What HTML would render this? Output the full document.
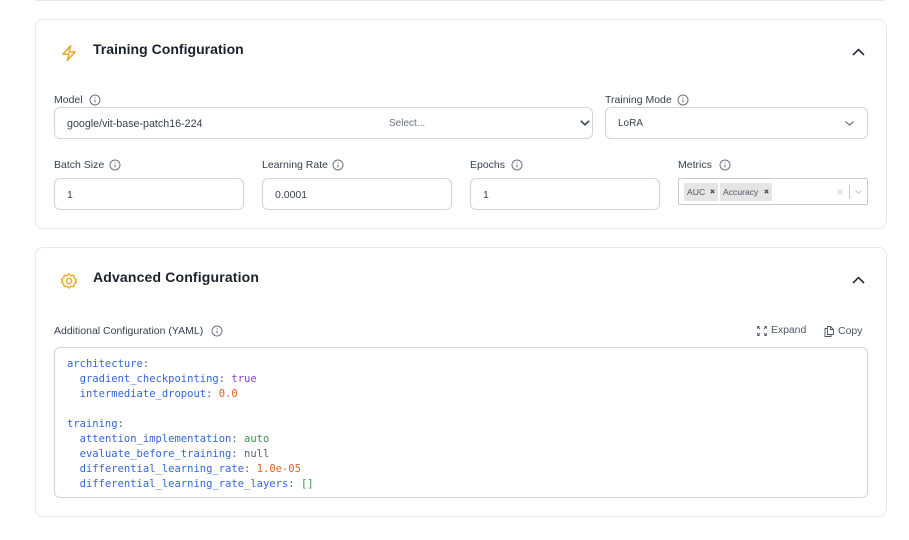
<!DOCTYPE html>
<html><head><meta charset="utf-8">
<style>
html,body{margin:0;padding:0;background:#fff;width:909px;height:540px;overflow:hidden}
body{position:relative;font-family:"Liberation Sans",sans-serif;color:#111827}
.a{position:absolute;white-space:pre}
.card{position:absolute;left:35px;width:850px;border:1px solid #e5e7eb;border-radius:8px;background:#fff}
.h{font-size:14px;font-weight:bold;color:#1a202c;left:93px;line-height:18px}
.l{font-size:10.500px;color:#374151;line-height:14px}
.i{position:absolute;border:1px solid #d1d5db;border-radius:6px;background:#fff;box-sizing:border-box}
.t{font-size:10.500px;color:#374151;line-height:14px}
svg{position:absolute;overflow:visible}
.code{position:absolute;left:67px;top:357px;font:10.500px/15px "DejaVu Sans Mono",monospace;color:#5b6472;white-space:pre}
.k{color:#3566d6}.s{color:#3f8f4f}.n{color:#d9622b}.b{color:#8a3fd0}
.tag{position:absolute;top:183px;height:18px;background:#e5e5e5;font-size:8.600px;line-height:18px;color:#4b5563;white-space:pre;padding-left:3px;box-sizing:border-box}
</style></head><body>
<div class="a" style="left:35px;top:0;width:850px;height:1px;background:#e5e7eb"></div>

<div class="card" style="top:19px;height:208px"></div>
<div class="card" style="top:247px;height:268px"></div>

<svg style="left:60px;top:44px" width="18" height="18" viewBox="0 0 24 24" fill="none" stroke="#e8a92e" stroke-width="2" stroke-linejoin="round"><path d="M3.750 13.500 14.250 2.250 12 10.500h8.250L9.750 21.750 12 13.500H3.750z"/></svg>
<div class="a h" style="top:40px;letter-spacing:.03px">Training Configuration</div>
<svg style="left:852px;top:47px" width="13" height="10" viewBox="0 0 13 10" fill="none" stroke="#111827" stroke-width="1.500"><path d="M1 8 6.500 2.500 12 8"/></svg>

<div class="a l" style="left:54px;top:93px">Model</div>
<svg style="left:89px;top:94px" width="12" height="12" viewBox="0 0 12 12" fill="none" stroke="#6b7280"><circle cx="6" cy="6" r="5"/><path d="M6 5.500v3M6 3.200v1"/></svg>
<div class="i" style="left:54px;top:107px;width:539px;height:32px"></div>
<div class="a t" style="left:67px;top:117px;font-size:10.700px">google/vit-base-patch16-224</div>
<div class="a t" style="left:389px;top:117px;color:#6b7280;font-size:10px">Select...</div>
<svg style="left:580px;top:120px" width="10" height="6" viewBox="0 0 10 6" fill="none" stroke="#4b5563" stroke-width="1.800"><path d="M.8.800 5 4.800 9.200.8"/></svg>

<div class="a l" style="left:605px;top:93px">Training Mode</div>
<svg style="left:677px;top:94px" width="12" height="12" viewBox="0 0 12 12" fill="none" stroke="#6b7280"><circle cx="6" cy="6" r="5"/><path d="M6 5.500v3M6 3.200v1"/></svg>
<div class="i" style="left:605px;top:107px;width:263px;height:32px"></div>
<div class="a t" style="left:618px;top:117px;font-size:10px">LoRA</div>
<svg style="left:845px;top:121px" width="9" height="5" viewBox="0 0 9 5" fill="none" stroke="#4b5563"><path d="M.5.500 4.500 4 8.500.5"/></svg>

<div class="a l" style="left:54px;top:158px">Batch Size</div>
<svg style="left:109px;top:159px" width="12" height="12" viewBox="0 0 12 12" fill="none" stroke="#6b7280"><circle cx="6" cy="6" r="5"/><path d="M6 5.500v3M6 3.200v1"/></svg>
<div class="i" style="left:54px;top:178px;width:190px;height:32px"></div>
<div class="a t" style="left:67px;top:188px">1</div>

<div class="a l" style="left:262px;top:158px">Learning Rate</div>
<svg style="left:332px;top:159px" width="12" height="12" viewBox="0 0 12 12" fill="none" stroke="#6b7280"><circle cx="6" cy="6" r="5"/><path d="M6 5.500v3M6 3.200v1"/></svg>
<div class="i" style="left:262px;top:178px;width:190px;height:32px"></div>
<div class="a t" style="left:275px;top:188px">0.0001</div>

<div class="a l" style="left:470px;top:158px">Epochs</div>
<svg style="left:511px;top:159px" width="12" height="12" viewBox="0 0 12 12" fill="none" stroke="#6b7280"><circle cx="6" cy="6" r="5"/><path d="M6 5.500v3M6 3.200v1"/></svg>
<div class="i" style="left:470px;top:178px;width:190px;height:32px"></div>
<div class="a t" style="left:483px;top:188px">1</div>

<div class="a l" style="left:678px;top:158px">Metrics</div>
<svg style="left:719px;top:159px" width="12" height="12" viewBox="0 0 12 12" fill="none" stroke="#6b7280"><circle cx="6" cy="6" r="5"/><path d="M6 5.500v3M6 3.200v1"/></svg>
<div class="i" style="left:678px;top:178px;width:190px;height:27px;border-radius:2px;border-color:#c9c9c9"></div>
<div class="tag" style="left:684px;width:34px">AUC</div>
<div class="tag" style="left:720px;width:52px">Accuracy</div>
<svg style="left:710px;top:189px" width="5" height="5" viewBox="0 0 5 5" stroke="#374151" stroke-width="1.100"><path d="M.8.800l3.400 3.400M4.200.800.800 4.200"/></svg>
<svg style="left:764px;top:189px" width="5" height="5" viewBox="0 0 5 5" stroke="#374151" stroke-width="1.100"><path d="M.8.800l3.400 3.400M4.200.800.800 4.200"/></svg>
<svg style="left:837px;top:189px" width="6" height="6" viewBox="0 0 6 6" stroke="#c4c4c4" stroke-width="1"><path d="M.8.800l4.400 4.400M5.200.800.800 5.200"/></svg>
<div class="a" style="left:849px;top:185px;width:1px;height:14px;background:#c9c9c9"></div>
<svg style="left:855px;top:190px" width="7" height="4" viewBox="0 0 7 4" fill="none" stroke="#c4c4c4"><path d="M.5.500l3 2.600 3-2.600"/></svg>

<svg style="left:60px;top:272px" width="18" height="18" viewBox="0 0 24 24" fill="none" stroke="#e8ad38" stroke-width="2" stroke-linejoin="round"><circle cx="12" cy="12" r="3.500"/><path d="M12 2.500l2.700 2.500 3.600-.5.700 3.500 3 2-1.500 2 1.500 2-3 2-.7 3.500-3.600-.5L12 21.500 9.300 19l-3.600.5L5 16l-3-2 1.500-2L2 10l3-2 .7-3.500 3.600.5z"/></svg>
<div class="a h" style="top:268px;letter-spacing:.16px">Advanced Configuration</div>
<svg style="left:852px;top:275px" width="13" height="10" viewBox="0 0 13 10" fill="none" stroke="#111827" stroke-width="1.500"><path d="M1 8 6.500 2.500 12 8"/></svg>

<div class="a l" style="left:54px;top:324px">Additional Configuration (YAML)</div>
<svg style="left:211px;top:325px" width="12" height="12" viewBox="0 0 12 12" fill="none" stroke="#6b7280"><circle cx="6" cy="6" r="5"/><path d="M6 5.500v3M6 3.200v1"/></svg>
<svg style="left:757px;top:326px" width="10" height="10" viewBox="0 0 10 10" fill="none" stroke="#4b5563" stroke-width=".9"><path d="M.6 2.800V.6h2.200M7.200.6h2.200v2.200M.6 7.200v2.200h2.200M7.200 9.400h2.200V7.200M1 1l2 2M9 1 7 3M1 9l2-2M9 9 7 7"/></svg>
<div class="a l" style="left:771px;top:324px;color:#4b5563;font-size:10.400px">Expand</div>
<svg style="left:824px;top:326px" width="11" height="11" viewBox="0 0 11 11" fill="none" stroke="#4b5563" stroke-width=".9"><path d="M3 2.500H1v8h6V8.500"/><path d="M3.500.5h3l3 3v5h-6z"/><path d="M6.500.5v3h3"/></svg>
<div class="a l" style="left:838px;top:324px;color:#4b5563">Copy</div>

<div class="i" style="left:54px;top:347px;width:814px;height:151px"></div>
<div class="code"><span class="k">architecture</span>:
  <span class="k">gradient_checkpointing</span>: <span class="b">true</span>
  <span class="k">intermediate_dropout</span>: <span class="n">0.0</span>

<span class="k">training</span>:
  <span class="k">attention_implementation</span>: <span class="s">auto</span>
  <span class="k">evaluate_before_training</span>: null
  <span class="k">differential_learning_rate</span>: <span class="n">1.0e-05</span>
  <span class="k">differential_learning_rate_layers</span>: <span class="s">[]</span></div>
</body></html>
